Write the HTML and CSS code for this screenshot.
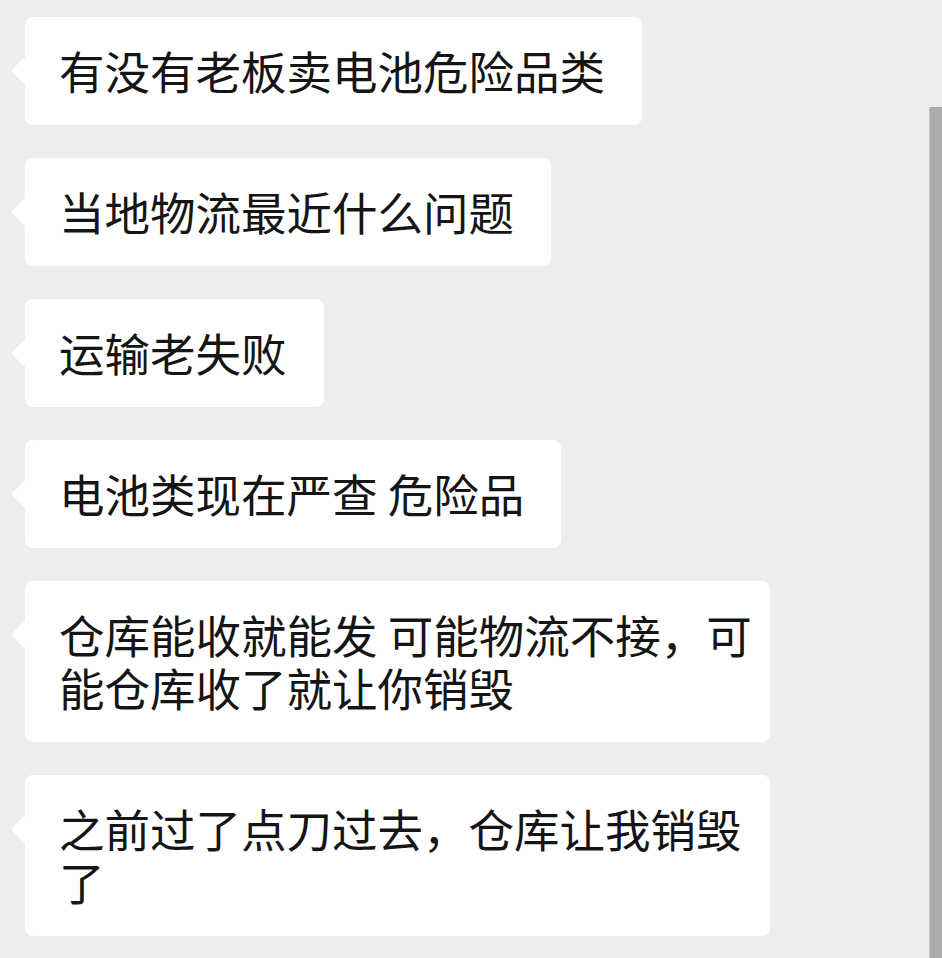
FILE: index.html
```html
<!DOCTYPE html>
<html lang="zh-CN">
<head>
    <meta charset="UTF-8">
    <meta name="viewport" content="width=device-width, initial-scale=1.0">
    <title>聊天记录</title>
    <link rel="stylesheet" href="styles.css">
</head>
<body>

<div class="chat">
    <div class="msg">有没有老板卖电池危险品类</div>
    <div class="msg">当地物流最近什么问题</div>
    <div class="msg">运输老失败</div>
    <div class="msg">电池类现在严查 危险品</div>
    <div class="msg wide"><span class="line">仓库能收就能发 可能物流不接，可</span><span class="line">能仓库收了就让你销毁</span></div>
    <div class="msg wide"><span class="line">之前过了点刀过去，仓库让我销毁</span><span class="line">了</span></div>
</div>

<!-- 右侧滚动条 -->
<div class="scrollbar"></div>

</body>
</html>
```

FILE: styles.css
```css
html, body {
    height: 100%;
}

body {
    margin: 0;
    background-color: #ededed;
    font-family: "Noto Sans CJK SC", "Noto Sans", sans-serif;
    color: #151515;
    overflow: hidden;
}

.chat {
    display: flex;
    flex-direction: column;
    align-items: flex-start;
    gap: 33px;
    padding: 17px 0 0 25px;
}

.msg {
    position: relative;
    box-sizing: border-box;
    max-width: 745px;
    padding: 27px 37px 28px 34px;
    background-color: #fff;
    border-radius: 8px;
    font-size: 45.5px;
    line-height: 53px;
    white-space: nowrap;
}

/* 气泡左侧小三角 */
.msg::before {
    content: "";
    position: absolute;
    left: -10px;
    top: 44px;
    width: 20px;
    height: 20px;
    background-color: #fff;
    border-radius: 3px;
    transform: rotate(45deg);
}

.msg.wide {
    width: 745px;
}

.line {
    display: block;
}

.scrollbar {
    position: absolute;
    top: 107px;
    right: 0;
    bottom: 0;
    width: 12px;
    background-color: #ababab;
    border-left: 1px solid #c9c9c9;
}
```
